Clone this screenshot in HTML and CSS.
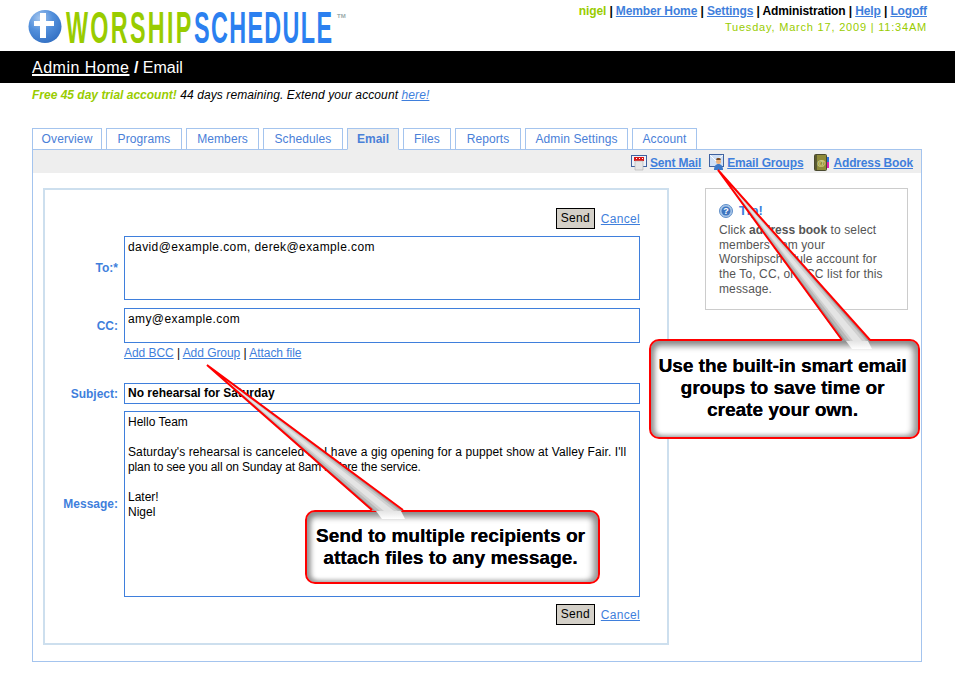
FILE: index.html
```html
<!DOCTYPE html>
<html lang="en">

<head>
    <meta charset="UTF-8">
    <meta name="viewport" content="width=device-width, initial-scale=1.0">
    <title>WorshipSchedule - Email</title>
    <link rel="stylesheet" href="styles.css">
</head>

<body>
    <div class="page">
        <header class="top">
            <svg class="logo" width="330" height="51" viewBox="0 0 330 51">
                <defs>
                    <radialGradient id="ball" cx="0.35" cy="0.25" r="0.85">
                        <stop offset="0" stop-color="#a8c8ee" />
                        <stop offset="0.45" stop-color="#5390dc" />
                        <stop offset="1" stop-color="#2f6cc0" />
                    </radialGradient>
                </defs>
                <circle cx="17" cy="26.5" r="16.5" fill="url(#ball)" />
                <path d="M12 13h6v8h8v5h-8v12h-6v-12h-6v-5h6z" fill="#fff" />
                <text class="logo-a" transform="translate(38 43) scale(0.85 1.6)">WORSHIP</text>
                <text class="logo-b" transform="translate(166 43) scale(0.85 1.6)">SCHEDULE</text>
                <text class="logo-tm" x="309" y="18">TM</text>
            </svg>
            <div class="usernav">
                <div class="usernav-links">
                    <span class="who">nigel</span> | <a href="#">Member Home</a> | <a href="#">Settings</a> | <span>Administration</span> | <a href="#">Help</a> | <a href="#">Logoff</a>
                </div>
                <div class="date">Tuesday, March 17, 2009 | 11:34AM</div>
            </div>
        </header>

        <div class="titlebar"><a href="#">Admin Home</a> <b>/</b> Email</div>

        <p class="trial"><b>Free 45 day trial account!</b> 44 days remaining. Extend your account <a href="#">here!</a></p>

        <ul class="tabs">
            <li>Overview</li>
            <li>Programs</li>
            <li>Members</li>
            <li>Schedules</li>
            <li class="active">Email</li>
            <li>Files</li>
            <li>Reports</li>
            <li>Admin Settings</li>
            <li>Account</li>
        </ul>

        <div class="panel">
            <div class="toolbar">
                <a href="#">
                    <svg width="16" height="17" viewBox="0 0 16 17">
                        <rect x="0.5" y="1.5" width="15" height="11" fill="#eef2f8" stroke="#3f62a0" />
                        <path d="M3 3h10v4H3z" fill="#d81818" />
                        <path d="M5 4h1v1H5zM8 4h1v1H8zM11 4h1v1h-1z" fill="#fff" />
                        <path d="M4 7h8v9H4z" fill="#e6e6e6" stroke="#b0b0b0" stroke-width="0.6" />
                    </svg>
                    Sent Mail</a>
                <a href="#">
                    <svg width="15" height="17" viewBox="0 0 15 17">
                        <rect x="0.5" y="0.5" width="14" height="12" fill="#cfe0f6" stroke="#3f62a0" />
                        <path d="M1 1l6 6 7-6" fill="none" stroke="#fff" />
                        <circle cx="9.500" cy="7.500" r="2.500" fill="#eab27e" />
                        <path d="M7 5.500c0-2 5-2 5 0l-1 .5H8z" fill="#7a4a20" />
                        <path d="M5 16c0-4 2-6 4.500-6s4.500 2 4.500 6z" fill="#3c78c8" />
                    </svg>
                    Email Groups</a>
                <a href="#" class="book-link">
                    <svg width="15" height="17" viewBox="0 0 15 17">
                        <rect x="0.5" y="0.5" width="12" height="16" rx="1" fill="#8f8b3a" stroke="#4a4a30" />
                        <rect x="1" y="1" width="2" height="15" fill="#5a5a30" />
                        <rect x="13" y="3" width="2" height="5" fill="#2a70e0" />
                        <rect x="13" y="8" width="2" height="6" fill="#e020b0" />
                        <text class="book-at" x="7.500" y="12">@</text>
                    </svg>
                    Address Book</a>
            </div>
            <div class="panel-body">
                <form class="mailform">
                    <div class="actions"><span class="send">Send</span><a href="#">Cancel</a></div>
                    <div class="grid">
                        <label class="label-to">To:*</label>
                        <div class="field to">david@example.com, derek@example.com</div>
                        <label>CC:</label>
                        <div class="field cc">amy@example.com</div>
                        <div class="addlinks"><a href="#">Add BCC</a> | <a href="#">Add Group</a> | <a href="#">Attach file</a></div>
                        <label class="label-subject">Subject:</label>
                        <div class="field subject">No rehearsal for Saturday</div>
                        <label>Message:</label>
                        <div class="field message">Hello Team<br><br><span class="line-a">Saturday's rehearsal is canceled as I have a gig opening for a puppet show at Valley Fair. I'll</span><br><span class="line-b">plan to see you all on Sunday at 8am before the service.</span><br><br>Later!<br>Nigel</div>
                    </div>
                    <div class="actions actions-bottom"><span class="send">Send</span><a href="#">Cancel</a></div>
                </form>
                <aside class="tip">
                    <h4>
                        <svg width="14" height="14" viewBox="0 0 14 14">
                            <circle cx="7" cy="7" r="6.500" fill="#a9c6e8" stroke="#5f8fc8" />
                            <circle cx="7" cy="7" r="4.500" fill="#3f76c0" />
                            <text class="tip-q" x="7" y="10">?</text>
                        </svg>
                        Tip!</h4>
                    <p>Click <b>address book</b> to select members from your Worshipschedule account for the To, CC, or BCC list for this message.</p>
                </aside>
            </div>
        </div>

        <div class="callout callout-groups">Use the built-in smart email<br>groups to save time or<br>create your own.</div>
        <div class="callout callout-send">Send to multiple recipients or<br>attach files to any message.</div>
        <svg class="pointers" width="955" height="689" viewBox="0 0 955 689">
            <defs>
                <linearGradient id="fade" x1="0" y1="0" x2="0" y2="1">
                    <stop offset="0" stop-color="#e4e4e4" />
                    <stop offset="1" stop-color="#fff" />
                </linearGradient>
            </defs>
            <polygon points="718,170 842,341 870,341" fill="#999" />
            <polygon points="718,170 846,341 868,341" fill="#b8b8b8" />
            <polygon points="718,170 850,341 866,341" fill="#d0d0d0" />
            <polygon points="718,170 853,341 862,341" fill="#e4e4e4" />
            <polygon points="846,341 868,341 872,349 852,349" fill="url(#fade)" />
            <polyline points="842,340 718,170 870,340" fill="none" stroke="#f00" stroke-width="2" />
            <polygon points="207,365 372,511 403,511" fill="#999" />
            <polygon points="207,365 376,511 401,511" fill="#b8b8b8" />
            <polygon points="207,365 380,511 398,511" fill="#d0d0d0" />
            <polygon points="207,365 384,511 394,511" fill="#e4e4e4" />
            <polygon points="376,511 401,511 405,519 382,519" fill="url(#fade)" />
            <polyline points="372,510 207,365 403,510" fill="none" stroke="#f00" stroke-width="2" />
        </svg>
    </div>
</body>

</html>
```
FILE: styles.css
```css
* {
    margin: 0;
    padding: 0;
    box-sizing: border-box
}

body {
    font-family: "Liberation Sans", Arial, sans-serif;
    font-size: 12px;
    letter-spacing: 0.4px;
    color: #000;
    background: #fff
}

a {
    color: #3f7fdc
}

.page {
    position: relative;
    width: 955px;
    height: 689px;
    overflow: hidden
}

.top {
    height: 51px;
    display: flex;
    justify-content: space-between
}

.logo {
    margin-left: 28px;
    flex: none
}

.logo-a,
.logo-b {
    font-size: 27.5px;
    font-weight: bold
}

.logo-a {
    fill: #99cc00;
    letter-spacing: 2.7px
}

.logo-b {
    fill: #2b80f0;
    letter-spacing: 1.6px
}

.logo-tm {
    font-size: 6px;
    font-weight: bold;
    letter-spacing: 0;
    fill: #9aa
}

.usernav {
    padding: 4px 28px 0 0;
    text-align: right;
    font-weight: bold;
    letter-spacing: -0.12px
}

.usernav-links {
    line-height: 15px
}

.who {
    color: #99cc00
}

.date {
    font-weight: normal;
    font-size: 11px;
    letter-spacing: 0.8px;
    color: #99cc00;
    line-height: 17px
}

.titlebar {
    height: 32px;
    line-height: 33px;
    padding-left: 32px;
    background: #000;
    color: #fff;
    font-size: 16px;
    letter-spacing: 0
}

.titlebar a {
    color: #fff;
    letter-spacing: 0.5px;
    text-decoration-thickness: 2px
}

.trial {
    margin: 5px 0 0 32px;
    font-style: italic;
    letter-spacing: 0.1px;
    line-height: 14px
}

.trial b {
    color: #99cc00;
    letter-spacing: 0
}

.tabs {
    list-style: none;
    display: grid;
    grid-template-columns: 70px 76px 73px 80px 52px 48px 66px 103px 65px;
    gap: 4px;
    margin: 26px 0 0 32px;
    height: 21px
}

.tabs li {
    height: 22px;
    line-height: 21px;
    text-align: center;
    border: 1px solid #a4c4ee;
    color: #4a80d8;
    background: #fff;
    letter-spacing: 0.1px
}

.tabs .active {
    background: #eee;
    border-bottom-color: #eee;
    font-weight: bold;
    letter-spacing: 0;
    position: relative
}

.panel {
    width: 890px;
    height: 513px;
    margin-left: 32px;
    border: 1px solid #a4c4ee
}

.toolbar {
    height: 23px;
    background: #eee;
    display: flex;
    justify-content: flex-end;
    align-items: center;
    gap: 8px;
    padding: 2px 8px 0 0
}

.toolbar a {
    display: flex;
    align-items: center;
    gap: 3px;
    font-weight: bold;
    letter-spacing: -0.15px
}

.toolbar .book-link {
    margin-left: 3px;
    gap: 4px
}

.book-at {
    font-size: 9px;
    fill: #dcd890;
    text-anchor: middle;
    letter-spacing: 0
}

.panel-body {
    display: flex;
    align-items: flex-start;
    gap: 36px;
    padding: 15px 13px 0 10px
}

.mailform {
    width: 626px;
    height: 457px;
    border: 2px solid #cddfee;
    padding: 18px 27px 0 0
}

.actions {
    display: flex;
    justify-content: flex-end;
    align-items: center;
    gap: 6px;
    height: 21px;
    letter-spacing: 0.3px
}

.actions-bottom {
    margin-top: 7px
}

.send {
    width: 39px;
    height: 21px;
    line-height: 19px;
    text-align: center;
    background: #d4d0c8;
    border: 1px solid #000
}

.grid {
    display: grid;
    grid-template-columns: 73px 516px;
    column-gap: 6px;
    margin-top: 7px
}

.grid label {
    align-self: center;
    text-align: right;
    font-weight: bold;
    letter-spacing: 0;
    color: #3f7fdc
}

.grid .label-to {
    margin-bottom: 8px
}

.grid .label-subject {
    margin-bottom: 7px
}

.field {
    border: 1px solid #3f7fdc;
    padding: 3px 3px;
    line-height: 15px
}

.to {
    height: 64px;
    margin-bottom: 8px
}

.cc {
    height: 35px
}

.addlinks {
    grid-column: 2;
    height: 40px;
    padding-top: 3px;
    line-height: 15px;
    letter-spacing: -0.05px
}

.subject {
    height: 21px;
    font-weight: bold;
    letter-spacing: 0;
    padding-top: 2px;
    margin-bottom: 7px
}

.message {
    height: 186px;
    letter-spacing: 0
}

.line-a {
    letter-spacing: 0.1px
}

.line-b {
    letter-spacing: -0.12px
}

.tip {
    width: 203px;
    height: 122px;
    border: 1px solid #ccc;
    padding: 15px 13px;
    color: #555;
    letter-spacing: 0.12px;
    line-height: 14.75px
}

.tip b {
    letter-spacing: 0
}

.tip h4 {
    display: flex;
    align-items: center;
    gap: 6px;
    color: #3f7fdc;
    font-size: 13px;
    margin-bottom: 4px
}

.tip-q {
    font-size: 9px;
    font-weight: bold;
    fill: #fff;
    text-anchor: middle;
    letter-spacing: 0
}

/* callouts sit on top of the page */
.pointers {
    position: absolute;
    left: 0;
    top: 0
}

.callout {
    position: absolute;
    display: flex;
    align-items: center;
    justify-content: center;
    text-align: center;
    font-size: 19px;
    font-weight: bold;
    letter-spacing: 0;
    line-height: 22px;
    text-shadow: 0.2px 0 0 #003;
    background: #fff;
    border: 2px solid #f00;
    border-radius: 10px;
    box-shadow: inset 0 8px 6px -3px #8c8c8c, inset 6px 0 5px -2px #999, inset -7px 0 6px -2px #999, inset 0 -4px 4px -2px #bbb
}

.callout-groups {
    left: 649px;
    top: 339px;
    width: 271px;
    height: 100px;
    padding: 0 4px 2px 0
}

.callout-send {
    left: 305px;
    top: 510px;
    width: 295px;
    height: 74px;
    padding-right: 4px;
    letter-spacing: 0.07px
}
```
